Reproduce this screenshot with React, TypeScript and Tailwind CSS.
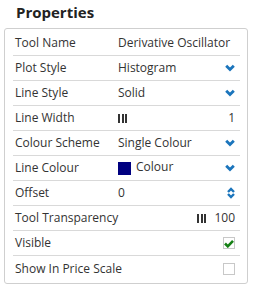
import React from "react";

const Chevron = () => (
  <svg width="10" height="8" viewBox="0 0 10 8" className="text-[#1b75bc]">
    <path d="M1.2 1.8 L5 5.6 L8.8 1.8" fill="none" stroke="currentColor" strokeWidth="2.8" />
  </svg>
);

const UpDown = () => (
  <svg width="8" height="12" viewBox="0 0 8 12" className="text-[#1b75bc]">
    <path d="M1 5 L4 2 L7 5 M1 7 L4 10 L7 7" fill="none" stroke="currentColor" strokeWidth="2.4" />
  </svg>
);

const Bars = () => (
  <span className="inline-flex gap-[1.5px] h-[9px] items-stretch align-[-1px]">
    <span className="w-[2px] bg-[#333]" />
    <span className="w-[2px] bg-[#333]" />
    <span className="w-[2px] bg-[#333]" />
  </span>
);

function Row({ label, children, last }: { label: string; children?: React.ReactNode; last?: boolean }) {
  return (
    <div className={`flex items-center h-[25px] px-[2px] ${last ? "" : "border-b border-[#d9d9d9]"}`}>
      <div className="w-[103px] shrink-0 whitespace-nowrap">{label}</div>
      <div className="flex-1 flex items-center pr-[3px] whitespace-nowrap">{children}</div>
    </div>
  );
}

export default function App() {
  return (
    <div className="w-[253px] h-[286px] bg-white text-[#333] text-[12px]" style={{ fontFamily: '"Open Sans", sans-serif' }}>
      <div className="pl-[16px] pt-[1px] h-[28px] text-[15px] font-bold text-[#222] leading-[22px]">Properties</div>
      <div className="ml-[4px] w-[244px] border border-[#cfcfcf] rounded-[3px] pl-[8px] pr-[7px] pt-[2px] pb-[2px]">
        <Row label="Tool Name">
          <span>Derivative Oscillator</span>
        </Row>
        <Row label="Plot Style">
          <span className="flex-1">Histogram</span>
          <Chevron />
        </Row>
        <Row label="Line Style">
          <span className="flex-1">Solid</span>
          <Chevron />
        </Row>
        <Row label="Line Width">
          <span className="flex-1"><Bars /></span>
          <span>1</span>
        </Row>
        <Row label="Colour Scheme">
          <span className="flex-1">Single Colour</span>
          <Chevron />
        </Row>
        <Row label="Line Colour">
          <span className="w-[13px] h-[13px] bg-[#000080] mr-[5px]" />
          <span className="flex-1 -mt-[3px]">Colour</span>
          <Chevron />
        </Row>
        <Row label="Offset">
          <span className="flex-1">0</span>
          <UpDown />
        </Row>
        <Row label="Tool Transparency">
          <span className="flex-1" />
          <span className="mr-[8px]"><Bars /></span>
          <span>100</span>
        </Row>
        <Row label="Visible">
          <span className="flex-1" />
          <span className="w-[12px] h-[12px] border border-[#c8c8c8] flex items-center justify-center">
            <svg width="10" height="9" viewBox="0 0 10 9">
              <path d="M1 4.5 L3.8 7.3 L9 1.8" fill="none" stroke="#168016" strokeWidth="2.6" />
            </svg>
          </span>
        </Row>
        <Row label="Show In Price Scale" last>
          <span className="flex-1" />
          <span className="w-[12px] h-[12px] border border-[#c8c8c8]" />
        </Row>
      </div>
    </div>
  );
}
